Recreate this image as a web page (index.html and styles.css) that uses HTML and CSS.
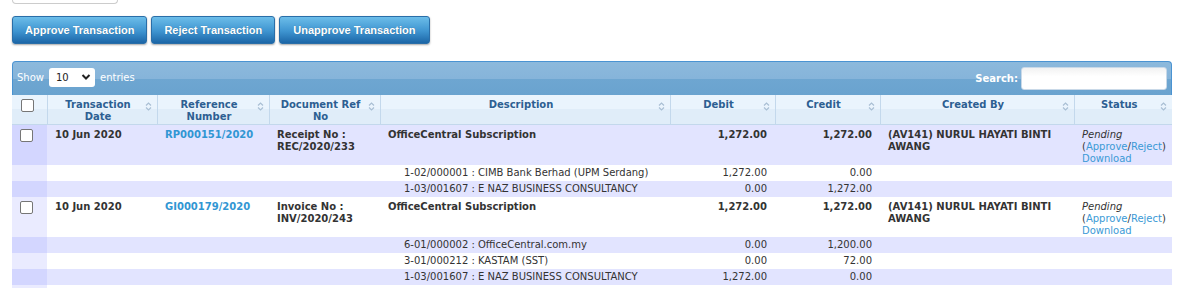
FILE: index.html
```html
<!DOCTYPE html>
<html>
<head>
<meta charset="utf-8">
<link rel="stylesheet" href="styles.css">
</head>
<body>
<div class="topbox"></div>
<div class="actions">
  <button class="btn">Approve Transaction</button>
  <button class="btn">Reject Transaction</button>
  <button class="btn">Unapprove Transaction</button>
</div>
<div class="wrapper">
  <div class="toolbar">
    <div class="length">Show <span class="select">10 <svg width="10" height="8" viewBox="0 0 10 8"><path d="M1.5 2 L5 5.5 L8.5 2" fill="none" stroke="#222" stroke-width="2"/></svg></span> entries</div>
    <div class="search">Search: <span class="searchbox"></span></div>
  </div>
  <table class="grid">
    <colgroup>
      <col style="width:35px"><col style="width:110px"><col style="width:112px"><col style="width:111px"><col style="width:290px"><col style="width:105px"><col style="width:105px"><col style="width:194px"><col style="width:98px">
    </colgroup>
    <thead>
      <tr>
        <th class="chk"><span class="cb"></span></th>
        <th><span class="hl">Transaction<br>Date</span><svg class="sort" width="7" height="9" viewBox="0 0 7 9"><path d="M1 3.5 L3.5 1 L6 3.5 M1 5.5 L3.5 8 L6 5.5" fill="none" stroke="#a9bfd4" stroke-width="1.2"/></svg></th>
        <th><span class="hl">Reference<br>Number</span><svg class="sort" width="7" height="9" viewBox="0 0 7 9"><path d="M1 3.5 L3.5 1 L6 3.5 M1 5.5 L3.5 8 L6 5.5" fill="none" stroke="#a9bfd4" stroke-width="1.2"/></svg></th>
        <th><span class="hl">Document Ref<br>No</span><svg class="sort" width="7" height="9" viewBox="0 0 7 9"><path d="M1 3.5 L3.5 1 L6 3.5 M1 5.5 L3.5 8 L6 5.5" fill="none" stroke="#a9bfd4" stroke-width="1.2"/></svg></th>
        <th><span class="hl">Description</span><svg class="sort" width="7" height="9" viewBox="0 0 7 9"><path d="M1 3.5 L3.5 1 L6 3.5 M1 5.5 L3.5 8 L6 5.5" fill="none" stroke="#a9bfd4" stroke-width="1.2"/></svg></th>
        <th><span class="hl">Debit</span><svg class="sort" width="7" height="9" viewBox="0 0 7 9"><path d="M1 3.5 L3.5 1 L6 3.5 M1 5.5 L3.5 8 L6 5.5" fill="none" stroke="#a9bfd4" stroke-width="1.2"/></svg></th>
        <th><span class="hl">Credit</span><svg class="sort" width="7" height="9" viewBox="0 0 7 9"><path d="M1 3.5 L3.5 1 L6 3.5 M1 5.5 L3.5 8 L6 5.5" fill="none" stroke="#a9bfd4" stroke-width="1.2"/></svg></th>
        <th><span class="hl">Created By</span><svg class="sort" width="7" height="9" viewBox="0 0 7 9"><path d="M1 3.5 L3.5 1 L6 3.5 M1 5.5 L3.5 8 L6 5.5" fill="none" stroke="#a9bfd4" stroke-width="1.2"/></svg></th>
        <th><span class="hl">Status</span><svg class="sort" width="7" height="9" viewBox="0 0 7 9"><path d="M1 3.5 L3.5 1 L6 3.5 M1 5.5 L3.5 8 L6 5.5" fill="none" stroke="#a9bfd4" stroke-width="1.2"/></svg></th>
      </tr>
    </thead>
    <tbody>
      <tr class="odd main">
        <td class="c1"><span class="cb"></span></td>
        <td class="b">10 Jun 2020</td>
        <td class="b"><a class="ref">RP000151/2020</a></td>
        <td class="b">Receipt No :<br>REC/2020/233</td>
        <td class="b">OfficeCentral Subscription</td>
        <td class="b num">1,272.00</td>
        <td class="b num">1,272.00</td>
        <td class="b">(AV141) NURUL HAYATI BINTI AWANG</td>
        <td class="status"><em>Pending</em><br>(<a>Approve</a>/<a>Reject</a>)<br><a>Download</a></td>
      </tr>
      <tr class="even sub">
        <td class="c1"></td><td></td><td></td><td></td>
        <td class="acct">1-02/000001 : CIMB Bank Berhad (UPM Serdang)</td>
        <td class="num">1,272.00</td><td class="num">0.00</td><td></td><td></td>
      </tr>
      <tr class="odd sub">
        <td class="c1"></td><td></td><td></td><td></td>
        <td class="acct">1-03/001607 : E NAZ BUSINESS CONSULTANCY</td>
        <td class="num">0.00</td><td class="num">1,272.00</td><td></td><td></td>
      </tr>
      <tr class="even main">
        <td class="c1"><span class="cb"></span></td>
        <td class="b">10 Jun 2020</td>
        <td class="b"><a class="ref">GI000179/2020</a></td>
        <td class="b">Invoice No :<br>INV/2020/243</td>
        <td class="b">OfficeCentral Subscription</td>
        <td class="b num">1,272.00</td>
        <td class="b num">1,272.00</td>
        <td class="b">(AV141) NURUL HAYATI BINTI AWANG</td>
        <td class="status"><em>Pending</em><br>(<a>Approve</a>/<a>Reject</a>)<br><a>Download</a></td>
      </tr>
      <tr class="odd sub">
        <td class="c1"></td><td></td><td></td><td></td>
        <td class="acct">6-01/000002 : OfficeCentral.com.my</td>
        <td class="num">0.00</td><td class="num">1,200.00</td><td></td><td></td>
      </tr>
      <tr class="even sub">
        <td class="c1"></td><td></td><td></td><td></td>
        <td class="acct">3-01/000212 : KASTAM (SST)</td>
        <td class="num">0.00</td><td class="num">72.00</td><td></td><td></td>
      </tr>
      <tr class="odd sub">
        <td class="c1"></td><td></td><td></td><td></td>
        <td class="acct">1-03/001607 : E NAZ BUSINESS CONSULTANCY</td>
        <td class="num">1,272.00</td><td class="num">0.00</td><td></td><td></td>
      </tr>
      <tr class="even sub">
        <td class="c1"></td><td></td><td></td><td></td>
        <td class="acct">&nbsp;</td>
        <td class="num"></td><td class="num"></td><td></td><td></td>
      </tr>
    </tbody>
  </table>
</div>
</body>
</html>
```
FILE: styles.css
```css
html, body {
  margin: 0;
  padding: 0;
  background: #fff;
}
body {
  padding: 0 12px;
  font-family: "DejaVu Sans", Verdana, sans-serif;
  font-size: 10px;
  color: #222;
  overflow: hidden;
}
.topbox {
  width: 104px;
  height: 3px;
  border: 1px solid #ccc;
  border-top: none;
  border-radius: 0 0 4px 4px;
}
.actions {
  display: flex;
  gap: 3px;
  margin-top: 12px;
}
.btn {
  height: 28px;
  padding: 0 12px;
  border: 1px solid #2a6ea8;
  border-radius: 3px;
  background: linear-gradient(#6cbde9, #3e94d0 55%, #1c66a7);
  color: #fff;
  font-family: "Liberation Sans", Arial, sans-serif;
  font-weight: bold;
  font-size: 11px;
  box-shadow: 0 1px 2px rgba(0,0,0,0.35);
  text-shadow: 0 0 1px rgba(0,0,0,0.3);
}
.btn:nth-child(2) { padding: 0 12px; margin-left: 1px; }
.btn:nth-child(3) { padding: 0 13px; margin-left: 1px; }
.wrapper {
  margin-top: 17px;
  width: 1160px;
}
.toolbar {
  height: 33px;
  border: 1px solid #4a93d2;
  border-bottom: none;
  border-radius: 4px 4px 0 0;
  background: linear-gradient(#8cb9dc, #86b4da 50%, #6ea6d1 51%, #6aa3cf);
  display: flex;
  align-items: center;
  justify-content: space-between;
  padding: 0 4px 0 4px;
  color: #fff;
}
.length {
  display: flex;
  align-items: center;
  gap: 5px;
  font-size: 10px;
  margin-top: -3px;
}
.select {
  display: inline-flex;
  align-items: center;
  justify-content: space-between;
  box-sizing: border-box;
  width: 46px;
  height: 19px;
  padding: 0 4px 0 7px;
  background: #fff;
  border-radius: 3px;
  color: #222;
}
.search {
  display: flex;
  align-items: center;
  gap: 3px;
  font-weight: bold;
  font-size: 10px;
}
.searchbox {
  display: inline-block;
  width: 144px;
  height: 21px;
  background: linear-gradient(#f2f2f2, #fff 40%);
  border: 1px solid #c9d9e8;
  border-radius: 3px;
}
.grid {
  width: 1160px;
  table-layout: fixed;
  border-collapse: collapse;
}
.grid th {
  position: relative;
  height: 29px;
  padding: 0 12px 0 4px;
  background: linear-gradient(#eaf4fd 0 50%, #e0edf9 50%);
  border-right: 1px solid #c3d8ec;
  border-bottom: 1px solid #c3d8ec;
  color: #2d5f92;
  font-weight: bold;
  font-size: 10px;
  line-height: 12px;
  vertical-align: top;
  text-align: center;
}
.grid th .hl { display: block; padding-top: 4px; }
.grid th:last-child { border-right: none; }
.grid th.chk { padding: 0 0 0 9px; text-align: left; border-right: 1px solid #c3d8ec; }
.sort {
  position: absolute;
  right: 5px;
  top: 7px;
}
.cb {
  display: inline-block;
  box-sizing: border-box;
  width: 13px;
  height: 13px;
  border: 1px solid #767676;
  border-radius: 2px;
  background: #fff;
  vertical-align: top;
}
.grid th.chk .cb { margin-top: 4px; }
.grid td {
  padding: 4px 8px 0;
  line-height: 12px;
  vertical-align: top;
  font-size: 10px;
  color: #333;
  overflow: hidden;
}
.grid tr.main td { height: 36px; }
.grid tr.sub td { padding: 2px 8px; }
.grid tr td.c1 { text-align: left; padding: 0 0 0 8px; }
.grid tr.main td.c1 .cb { margin-top: 4px; }
tr.odd { background: #e2e4ff; }
tr.even { background: #fff; }
tr.odd td.c1 { background: #d3d6ff; }
tr.even td.c1 { background: #eaebff; }
.b { font-weight: bold; }
.num { text-align: right; }
.grid tr.sub td.acct { padding-left: 24px; }
a { color: #3b9ad6; }
a.ref { color: #3196d3; }
.status em { font-style: italic; }
```
